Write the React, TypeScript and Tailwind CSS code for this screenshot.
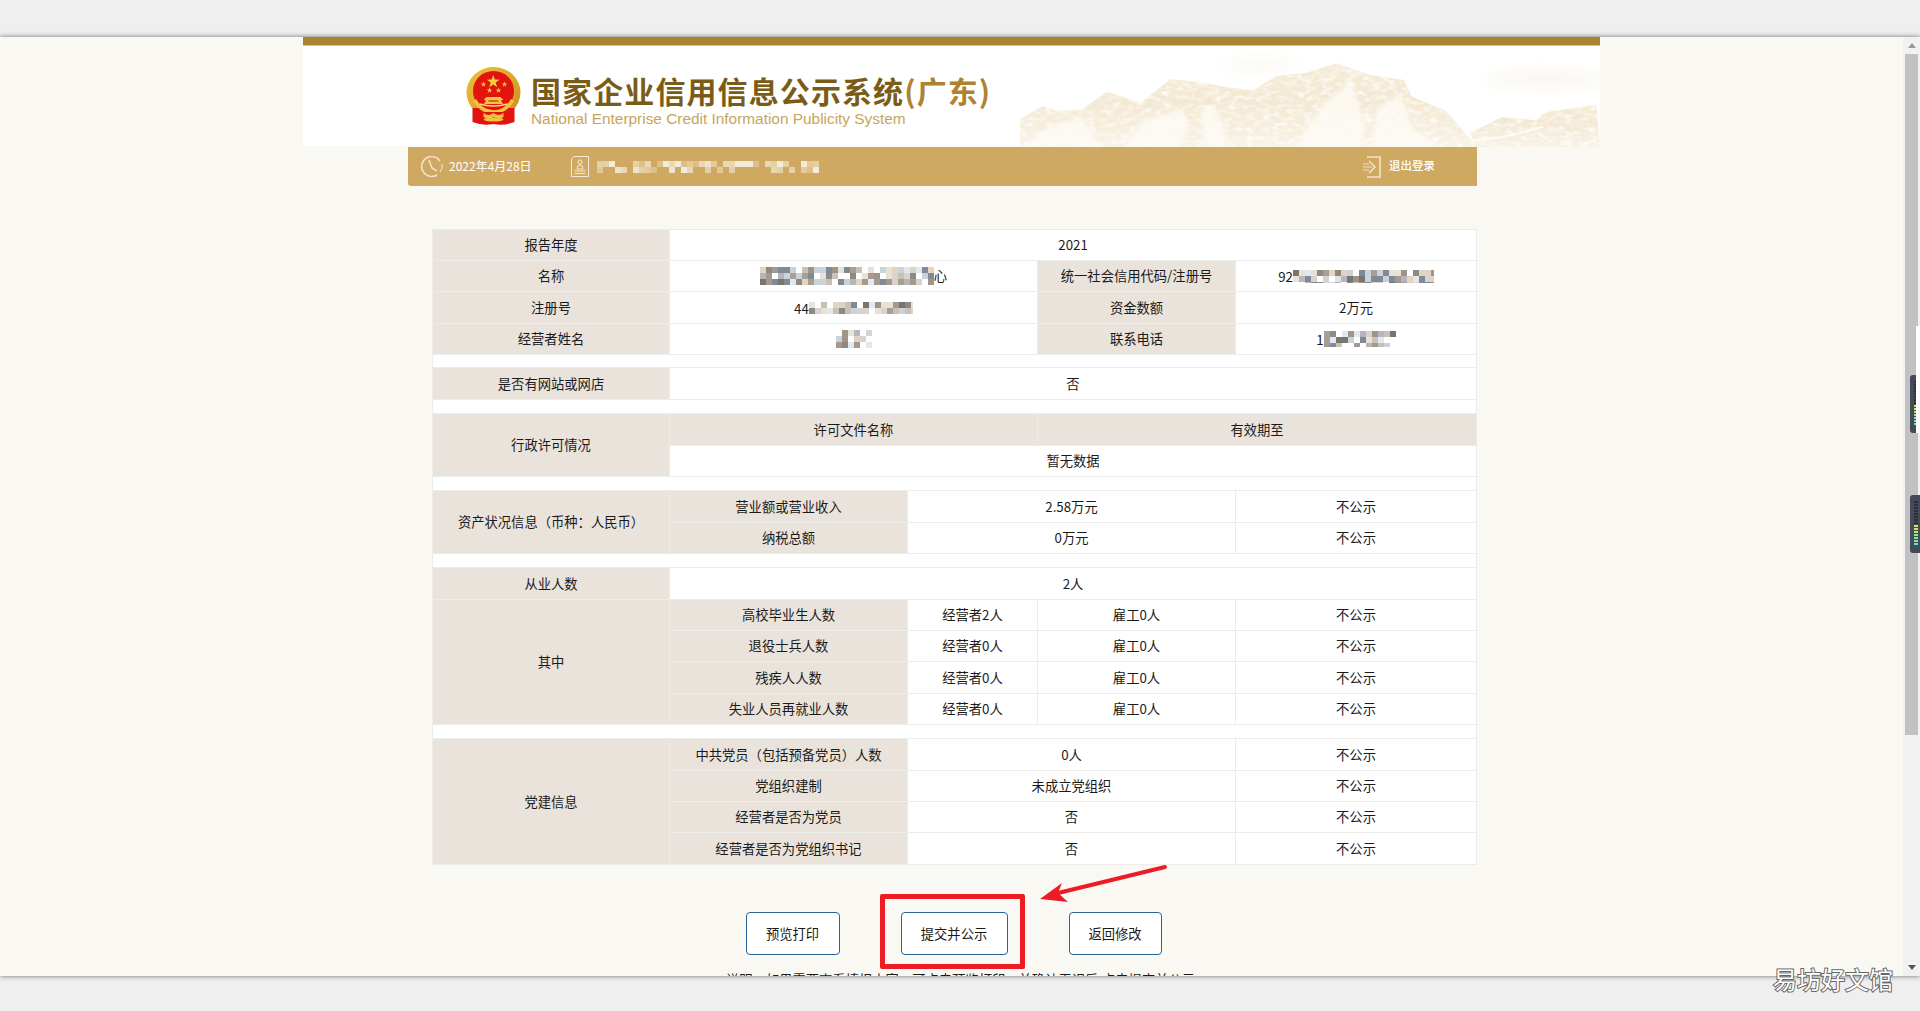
import React from 'react';

function rnd(seed: number) {
  let s = seed;
  return () => {
    s = (s * 9301 + 49297) % 233280;
    return s / 233280;
  };
}

function Mosaic({ w, h, cell = 6, colors, seed, fill = 0.85, className = '' }: { w: number; h: number; cell?: number; colors: string[]; seed: number; fill?: number; className?: string }) {
  const r = rnd(seed);
  const rects: React.ReactNode[] = [];
  for (let y = 0; y < h; y += cell) {
    for (let x = 0; x < w; x += cell) {
      const a = r();
      const c = colors[Math.floor(r() * colors.length)];
      if (a < fill) rects.push(<rect key={`${x}-${y}`} x={x} y={y} width={cell} height={cell} fill={c} />);
    }
  }
  return (
    <svg width={w} height={h} viewBox={`0 0 ${w} ${h}`} className={`inline-block shrink-0 ${className}`} shapeRendering="crispEdges">
      {rects}
    </svg>
  );
}

const GREY = ['#a89f92', '#8d8a82', '#b8b4bd', '#d9d3cc', '#7f8a96', '#c9c1b4', '#dfe9ef', '#9f948a', '#e8e2d6', '#a5988f', '#c8d3da', '#e6d2c0', '#76756e'];
const PALE = ['#e4d0a5', '#eee2c9', '#e6c995', '#f1ebdc', '#dcc08a', '#ead7b5'];

function Emblem() {
  return (
    <svg width="55" height="59" viewBox="0 0 54 59" className="shrink-0">
      <defs>
        <linearGradient id="gold" x1="0" y1="0" x2="1" y2="1">
          <stop offset="0" stopColor="#f0c23a" />
          <stop offset="1" stopColor="#c98f1e" />
        </linearGradient>
      </defs>
      <ellipse cx="27" cy="25.5" rx="27" ry="25.5" fill="url(#gold)" />
      <path d="M6 41 L48 41 L48 55 Q38 59 27 57 Q16 59 6 55 Z" fill="#e3130f" />
      <ellipse cx="27" cy="24" rx="20.5" ry="20" fill="#e3130f" />
      <path d="M26.7 8 L28.3 12.6 L33 12.7 L29.2 15.6 L30.6 20.2 L26.7 17.5 L22.8 20.2 L24.2 15.6 L20.4 12.7 L25.1 12.6 Z" fill="#f5cf3e" />
      <path d="M17 14.5 L17.8 16.4 L19.8 16.5 L18.2 17.8 L18.8 19.7 L17 18.6 L15.2 19.7 L15.8 17.8 L14.2 16.5 L16.2 16.4 Z" fill="#f2c53a" />
      <path d="M38 14.5 L38.8 16.4 L40.8 16.5 L39.2 17.8 L39.8 19.7 L38 18.6 L36.2 19.7 L36.8 17.8 L35.2 16.5 L37.2 16.4 Z" fill="#f2c53a" />
      <path d="M23 20.5 L23.8 22.4 L25.8 22.5 L24.2 23.8 L24.8 25.7 L23 24.6 L21.2 25.7 L21.8 23.8 L20.2 22.5 L22.2 22.4 Z" fill="#f2c53a" />
      <path d="M32 20.5 L32.8 22.4 L34.8 22.5 L33.2 23.8 L33.8 25.7 L32 24.6 L30.2 25.7 L30.8 23.8 L29.2 22.5 L31.2 22.4 Z" fill="#f2c53a" />
      <path d="M17 33 L20 30 L34 30 L37 33 L35 33 L35 35 L37 37 L17 37 L19 35 L19 33 Z" fill="#efc445" />
      <rect x="22" y="33" width="10" height="2" fill="#c8761a" />
      <path d="M8 33 Q15 45 27 45 Q39 45 46 33" fill="none" stroke="#efc240" strokeWidth="3.5" />
      <path d="M13 37 Q27 41 41 37" fill="none" stroke="#f6dc7a" strokeWidth="1.5" />
      <path d="M15 45 L39 45 L41 50 L37 56 L17 56 L13 50 Z" fill="#e3130f" />
      <path d="M17 46 Q22 50 27 46 Q32 50 37 46 L37 50 Q32 53 27 50 Q22 53 17 50 Z" fill="#f0c23a" />
      <ellipse cx="27" cy="52.5" rx="10" ry="2" fill="#efc240" />
    </svg>
  );
}

function Mountains() {
  return (
    <svg viewBox="0 0 1540 320" preserveAspectRatio="none" className="absolute left-[717px] top-0 h-[101px] w-[580px]">
      <defs>
        <linearGradient id="rockfill" x1="0" y1="0" x2="0" y2="1">
          <stop offset="0" stopColor="#f4ebd8" />
          <stop offset="0.45" stopColor="#f3e8d2" />
          <stop offset="1" stopColor="#f8f2e6" />
        </linearGradient>
        <filter id="rock" x="0" y="0" width="1" height="1">
          <feTurbulence type="fractalNoise" baseFrequency="0.045 0.07" numOctaves="5" seed="7" />
          <feColorMatrix values="0 0 0 0 1  0 0 0 0 0.99  0 0 0 0 0.96  2.2 0 0 0 -0.95" />
          <feComposite in2="SourceGraphic" operator="in" result="n" />
          <feMerge>
            <feMergeNode in="SourceGraphic" />
            <feMergeNode in="n" />
          </feMerge>
        </filter>
        <filter id="soft" x="-50%" y="-150%" width="200%" height="400%"><feGaussianBlur stdDeviation="22" /></filter>
        <filter id="edge" x="-20%" y="-20%" width="140%" height="140%"><feGaussianBlur stdDeviation="6" /></filter>
      </defs>
      <ellipse cx="640" cy="60" rx="100" ry="14" fill="#faf6ec" filter="url(#soft)" />
      <ellipse cx="1400" cy="105" rx="170" ry="24" fill="#faf6ee" filter="url(#soft)" />
      <g filter="url(#rock)">
        <path d="M0 232 L60 190 L100 205 L165 200 L230 145 L320 180 L400 105 L480 115 L545 130 L620 140 L680 95 L760 85 L840 55 L930 92 L1020 108 L1040 160 L1130 205 L1215 320 L0 320 Z" fill="url(#rockfill)" />
        <path d="M1195 275 L1280 225 L1370 235 L1395 210 L1530 185 L1540 320 L1210 320 Z" fill="url(#rockfill)" />
      </g>
      <g fill="#fefcf7" opacity="0.8" filter="url(#edge)">
        <path d="M0 320 L90 250 L165 225 L215 320 Z" />
        <path d="M275 320 L330 235 L420 205 L450 250 L420 320 Z" />
        <path d="M480 200 L520 190 L555 320 L490 320 Z" />
        <path d="M730 320 L800 190 L880 110 L915 250 L905 320 Z" />
        <path d="M930 320 L950 200 L1010 150 L1040 260 L1120 320 Z" />
      </g>
      <path d="M1205 300 Q1300 290 1390 255" fill="none" stroke="#fefcf7" strokeWidth="6" />
    </svg>
  );
}

const Clock = () => (
  <svg width="24" height="22" viewBox="0 0 24 22" fill="none" stroke="#f0e3c8" strokeWidth="1.6" className="shrink-0">
    <path d="M17 19 A10 10 0 1 1 20 5" />
    <path d="M22 8 A10 10 0 0 1 20 16" opacity="0.7" />
    <path d="M9 4 L12 12 L17 15" />
  </svg>
);

const IdIcon = () => (
  <svg width="18" height="21" viewBox="0 0 18 21" fill="none" stroke="#f5ecd8" strokeWidth="1" className="shrink-0">
    <path d="M3 0.5 H17.5 V20.5 H0.5 V3 Z" />
    <circle cx="9" cy="6" r="2" />
    <path d="M6 13 Q6 9 9 9 Q12 9 12 13 Z" />
    <path d="M3.5 15 H14.5 M3.5 17.5 H14.5" />
  </svg>
);

const Logout = () => (
  <svg width="18" height="22" viewBox="0 0 18 22" fill="none" stroke="#f0e3c8" strokeWidth="1.6" className="shrink-0">
    <path d="M4 1 H17 V21 H4" />
    <path d="M0 11 H9 M0 8 H6 M0 14 H6" strokeWidth="1.2" />
    <path d="M6 5 L12 11 L6 17" />
  </svg>
);

const L = ({ children, rowSpan, colSpan }: { children?: React.ReactNode; rowSpan?: number; colSpan?: number }) => (
  <td rowSpan={rowSpan} colSpan={colSpan} className="border border-[#ececea] bg-[#e9e3dc] p-0 text-center align-middle">{children}</td>
);
const V = ({ children, colSpan }: { children?: React.ReactNode; colSpan?: number }) => (
  <td colSpan={colSpan} className="border border-[#ececea] bg-white p-0 text-center align-middle">{children}</td>
);
const Gap = ({ first }: { first?: boolean }) => (
  <tr className={first ? 'h-[13px]' : 'h-[14px]'}><td colSpan={5} className="border border-[#ececea] bg-white p-0" /></tr>
);
const Blur = ({ children }: { children: React.ReactNode }) => (
  <span className="inline-flex items-center justify-center align-middle">{children}</span>
);

function InfoTable() {
  return (
    <table className="ml-[129px] w-[1044px] table-fixed border-collapse text-[13.3px] leading-none text-[#1a1a1a]">
      <colgroup>
        <col className="w-[237px]" />
        <col className="w-[238px]" />
        <col className="w-[130px]" />
        <col className="w-[198px]" />
        <col className="w-[241px]" />
      </colgroup>
      <tbody>
        <tr className="h-[31px]"><L>报告年度</L><V colSpan={4}>2021</V></tr>
        <tr className="h-[31px]">
          <L>名称</L>
          <V colSpan={2}><Blur><Mosaic w={174} h={18} colors={GREY} seed={11} /><span>心</span></Blur></V>
          <L>统一社会信用代码/注册号</L>
          <V><Blur><span>92</span><Mosaic w={141} h={13} colors={GREY} seed={23} /></Blur></V>
        </tr>
        <tr className="h-[32px]">
          <L>注册号</L>
          <V colSpan={2}><Blur><span>44</span><Mosaic w={104} h={12} colors={GREY} seed={37} fill={0.95} /></Blur></V>
          <L>资金数额</L>
          <V>2万元</V>
        </tr>
        <tr className="h-[31px]">
          <L>经营者姓名</L>
          <V colSpan={2}><Blur><Mosaic w={36} h={18} colors={GREY} seed={41} fill={0.7} /></Blur></V>
          <L>联系电话</L>
          <V><Blur><span>1</span><Mosaic w={72} h={16} colors={GREY} seed={53} fill={0.75} /></Blur></V>
        </tr>
        <Gap first />
        <tr className="h-[32px]"><L>是否有网站或网店</L><V colSpan={4}>否</V></tr>
        <Gap />
        <tr className="h-[32px]"><L rowSpan={2}>行政许可情况</L><L colSpan={2}>许可文件名称</L><L colSpan={2}>有效期至</L></tr>
        <tr className="h-[31px]"><V colSpan={4}>暂无数据</V></tr>
        <Gap />
        <tr className="h-[32px]"><L rowSpan={2}>资产状况信息（币种：人民币）</L><L>营业额或营业收入</L><V colSpan={2}>2.58万元</V><V>不公示</V></tr>
        <tr className="h-[31px]"><L>纳税总额</L><V colSpan={2}>0万元</V><V>不公示</V></tr>
        <Gap />
        <tr className="h-[32px]"><L>从业人数</L><V colSpan={4}>2人</V></tr>
        <tr className="h-[31px]"><L rowSpan={4}>其中</L><L>高校毕业生人数</L><V>经营者2人</V><V>雇工0人</V><V>不公示</V></tr>
        <tr className="h-[31px]"><L>退役士兵人数</L><V>经营者0人</V><V>雇工0人</V><V>不公示</V></tr>
        <tr className="h-[32px]"><L>残疾人人数</L><V>经营者0人</V><V>雇工0人</V><V>不公示</V></tr>
        <tr className="h-[31px]"><L>失业人员再就业人数</L><V>经营者0人</V><V>雇工0人</V><V>不公示</V></tr>
        <Gap />
        <tr className="h-[32px]"><L rowSpan={4}>党建信息</L><L>中共党员（包括预备党员）人数</L><V colSpan={2}>0人</V><V>不公示</V></tr>
        <tr className="h-[31px]"><L>党组织建制</L><V colSpan={2}>未成立党组织</V><V>不公示</V></tr>
        <tr className="h-[31px]"><L>经营者是否为党员</L><V colSpan={2}>否</V><V>不公示</V></tr>
        <tr className="h-[32px]"><L>经营者是否为党组织书记</L><V colSpan={2}>否</V><V>不公示</V></tr>
      </tbody>
    </table>
  );
}

const Stripes = () => (
  <div className="flex flex-col gap-[1px] pl-[4px] pt-[6px]">
    {['#2c303a', '#2c303a', '#2c303a', '#2c303a', '#2c303a', '#2c303a', '#2c303a', '#2c303a', '#d8e35a', '#d8e35a', '#b6e86a', '#8fe88a', '#7feaa0', '#6ceab0', '#5ce8c0'].map((c, i) => (
      <span key={i} className="block h-[2px] w-[4px]" style={{ backgroundColor: c }} />
    ))}
  </div>
);

export default function App() {
  return (
    <div className="relative flex h-screen w-full flex-col overflow-hidden bg-[#efefef] [font-family:'Noto_Sans_CJK_SC','Liberation_Sans',sans-serif]">
      <div className="h-[37px] shrink-0" />
      <main className="relative flex h-[939px] shrink-0 shadow-[0_0_5px_rgba(0,0,0,0.55)]">
        <div className="min-w-0 flex-1 overflow-hidden bg-[#faf8f2]">
          <div className="mx-auto w-[1297px]">
            <div className="h-[8px] bg-[#ad8230]" />
            <div className="h-[1px] bg-[#dcc48f]" />
            <header className="relative flex h-[100px] items-start bg-white pl-[163px] pt-[21px]">
              <Mountains />
              <Emblem />
              <div className="relative ml-[10px] flex flex-col">
                <div className="mt-[5px] whitespace-nowrap text-[30px] font-bold leading-[36px] tracking-[1.1px] text-[#7a5c17]">
                  国家企业信用信息公示系统<span className="text-[#ad8230]">(广东)</span>
                </div>
                <div className="mt-[2px] whitespace-nowrap text-[15.4px] leading-[18px] text-[#c7a55c] [font-family:'Liberation_Sans',sans-serif]">
                  National Enterprise Credit Information Publicity System
                </div>
              </div>
            </header>
            <nav className="ml-[105px] mt-[1px] flex h-[39px] w-[1069px] items-center rounded-bl-[3px] bg-[#cfa961] text-white">
              <div className="ml-[12px]"><Clock /></div>
              <span className="mb-[2px] ml-[5px] whitespace-nowrap text-[12px]">2022年4月28日</span>
              <div className="ml-[39px]"><IdIcon /></div>
              <Mosaic w={222} h={12} colors={PALE} seed={71} fill={0.6} className="ml-[8px]" />
              <div className="ml-auto flex items-center">
                <Logout />
                <span className="mb-[2px] ml-[8px] mr-[42px] whitespace-nowrap text-[11.5px] font-medium">退出登录</span>
              </div>
            </nav>
            <div className="mt-[43px]">
              <InfoTable />
            </div>
            <div className="mt-[47px] flex justify-center gap-[61px] pl-[4px] text-[13.3px] text-[#1a1a1a]">
              <button className="h-[43px] w-[94px] rounded-[4px] border border-[#2a6496] bg-white">预览打印</button>
              <div className="relative">
                <button className="h-[43px] w-[107px] rounded-[4px] border border-[#2a6496] bg-white">提交并公示</button>
                <div className="absolute left-[-21px] top-[-18px] h-[75px] w-[145px] rounded-[2px] border-[5px] border-[#ed1c24]" />
              </div>
              <button className="h-[43px] w-[93px] rounded-[4px] border border-[#2a6496] bg-white">返回修改</button>
            </div>
            <p className="mt-[17px] whitespace-nowrap pl-[423px] text-[13.3px] leading-[16px] text-[#1a1a1a]">
              说明：如果需要查看填报内容，可点击预览打印，并确认无误后,点击提交并公示
            </p>
          </div>
        </div>
        <aside className="relative flex w-[17px] shrink-0 flex-col bg-[#f1f1f1] pl-[2px] pr-[2px]">
          <div className="flex h-[17px] items-center justify-center">
            <svg width="8" height="5" viewBox="0 0 8 5"><path d="M4 0 L8 5 L0 5 Z" fill="#9b9b9b" /></svg>
          </div>
          <div className="h-[681px] bg-[#c1c1c1]" />
          <div className="mt-auto flex h-[17px] items-center justify-center">
            <svg width="8" height="5" viewBox="0 0 8 5"><path d="M4 5 L8 0 L0 0 Z" fill="#555" /></svg>
          </div>
          <div className="absolute left-[13px] top-[289px] h-[107px] w-[4px] bg-white" />
          <div className="absolute left-[7px] top-[338px] h-[58px] w-[10px] overflow-hidden rounded-l-[3px] bg-[#454a58]"><Stripes /></div>
          <div className="absolute left-[13px] top-[338px] h-[58px] w-[4px] bg-white" />
          <div className="absolute left-[7px] top-[458px] h-[58px] w-[10px] overflow-hidden rounded-l-[3px] bg-[#454a58]"><Stripes /></div>
        </aside>
        <svg width="145" height="50" viewBox="0 0 145 50" className="absolute left-[1030px] top-[823px]">
          <path d="M135 7 L24 34" stroke="#ed1c24" strokeWidth="4" strokeLinecap="round" />
          <path d="M10 39 L32 23 L28 33 L38 42 Z" fill="#ed1c24" />
        </svg>
      </main>
      <div className="flex-1" />
      <div className="absolute left-[1773px] top-[964px] text-[24px] leading-[30px] text-white [-webkit-text-stroke:2px_#666] [paint-order:stroke_fill]">易坊好文馆</div>
    </div>
  );
}
